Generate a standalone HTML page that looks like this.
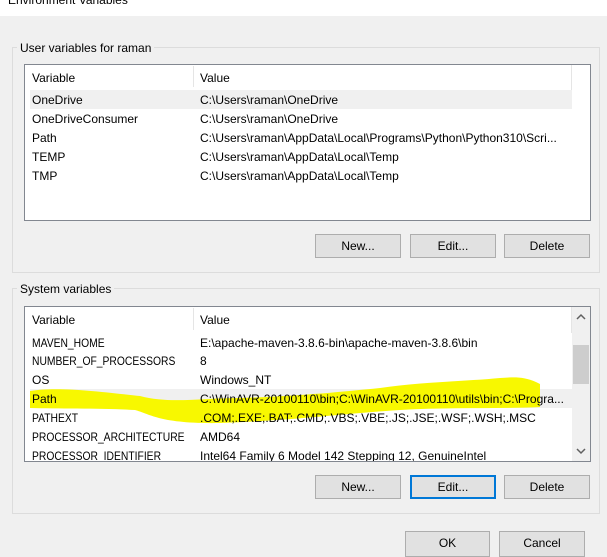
<!DOCTYPE html>
<html><head><style>
*{margin:0;padding:0;box-sizing:border-box}
body{width:607px;height:555px;background:#f0f0f0;font-family:"Liberation Sans",sans-serif;font-size:12px;color:#000;position:relative;overflow:hidden}
.a{position:absolute}
.grp{position:absolute;border:1px solid #dcdcdc}
.lbl{position:absolute;background:#f0f0f0;padding:0 3px;line-height:14px}
.lb{position:absolute;background:#fff;border:1px solid #828790}
.t{position:absolute;white-space:nowrap;line-height:19px}
.c{transform:scaleX(0.86);transform-origin:left center}
.btn{position:absolute;background:#e1e1e1;border:1px solid #adadad;text-align:center;line-height:22px}
</style></head><body>
<div class="a" style="left:0;top:0;width:607px;height:16px;background:#fff"></div>
<div class="t" style="left:8px;top:-9px">Environment Variables</div>

<div class="grp" style="left:12px;top:47px;width:588px;height:226px"></div>
<div class="lbl" style="left:17px;top:41px">User variables for raman</div>
<div class="lb" style="left:24px;top:64px;width:567px;height:157px"></div>
<div class="a" style="left:25px;top:65px;width:547px;height:25px;background:#fff;border-right:1px solid #e5e5e5"></div>
<div class="a" style="left:193px;top:66px;width:1px;height:21px;background:#e5e5e5"></div>
<div class="t" style="left:32px;top:69px">Variable</div><div class="t" style="left:200px;top:69px">Value</div>
<div class="a" style="left:30px;top:90px;width:542px;height:19px;background:#f0f0f0"></div>
<div class="t" style="left:32px;top:91px">OneDrive</div><div class="t" style="left:200px;top:91px">C:\Users\raman\OneDrive</div>
<div class="t" style="left:32px;top:110px">OneDriveConsumer</div><div class="t" style="left:200px;top:110px">C:\Users\raman\OneDrive</div>
<div class="t" style="left:32px;top:129px">Path</div><div class="t" style="left:200px;top:129px">C:\Users\raman\AppData\Local\Programs\Python\Python310\Scri...</div>
<div class="t" style="left:32px;top:148px">TEMP</div><div class="t" style="left:200px;top:148px">C:\Users\raman\AppData\Local\Temp</div>
<div class="t" style="left:32px;top:167px">TMP</div><div class="t" style="left:200px;top:167px">C:\Users\raman\AppData\Local\Temp</div>
<div class="btn" style="left:315px;top:234px;width:86px;height:24px">New...</div>
<div class="btn" style="left:410px;top:234px;width:86px;height:24px">Edit...</div>
<div class="btn" style="left:504px;top:234px;width:86px;height:24px">Delete</div>

<div class="grp" style="left:12px;top:288px;width:588px;height:226px"></div>
<div class="lbl" style="left:17px;top:282px">System variables</div>
<div class="lb" style="left:24px;top:306px;width:567px;height:156px;overflow:hidden"></div>
<div class="a" style="left:25px;top:307px;width:547px;height:26px;background:#fff;border-right:1px solid #e5e5e5"></div>
<div class="a" style="left:193px;top:308px;width:1px;height:22px;background:#e5e5e5"></div>
<div class="t" style="left:32px;top:311px">Variable</div><div class="t" style="left:200px;top:311px">Value</div>
<div class="a" style="left:30px;top:389px;width:542px;height:19px;background:#f0f0f0"></div>
<svg class="a" style="left:0;top:0" width="607" height="555"><path d="M30 391 C60 386 110 393 140 396 C170 404 200 398 240 398 C300 396 340 392 380 388 C420 382 470 381 500 378 C515 377 525 376 540 384 L540 407 C500 409 450 407 400 410 C340 414 300 420 220 423 C160 424 150 414 135 410 C100 408 60 409 30 408 Z" fill="#f8f800"/></svg>
<div style="position:absolute;left:25px;top:334px;width:547px;height:127px;overflow:hidden">
<div class="t c" style="left:7px;top:0">MAVEN_HOME</div><div class="t" style="left:175px;top:0">E:\apache-maven-3.8.6-bin\apache-maven-3.8.6\bin</div>
<div class="t c" style="left:7px;top:18px">NUMBER_OF_PROCESSORS</div><div class="t" style="left:175px;top:18px">8</div>
<div class="t" style="left:7px;top:37px">OS</div><div class="t" style="left:175px;top:37px">Windows_NT</div>
<div class="t" style="left:7px;top:56px">Path</div><div class="t" style="left:175px;top:56px">C:\WinAVR-20100110\bin;C:\WinAVR-20100110\utils\bin;C:\Progra...</div>
<div class="t c" style="left:7px;top:75px">PATHEXT</div><div class="t" style="left:175px;top:75px">.COM;.EXE;.BAT;.CMD;.VBS;.VBE;.JS;.JSE;.WSF;.WSH;.MSC</div>
<div class="t c" style="left:7px;top:94px">PROCESSOR_ARCHITECTURE</div><div class="t" style="left:175px;top:94px">AMD64</div>
<div class="t c" style="left:7px;top:113px">PROCESSOR_IDENTIFIER</div><div class="t" style="left:175px;top:113px">Intel64 Family 6 Model 142 Stepping 12, GenuineIntel</div>
</div>
<div class="a" style="left:572px;top:307px;width:18px;height:154px;background:#f0f0f0"></div>
<div class="a" style="left:573px;top:345px;width:16px;height:39px;background:#cdcdcd"></div>
<svg class="a" style="left:572px;top:310px" width="18" height="150"><path d="M5 9 L9 5 L13 9" stroke="#606060" stroke-width="1.5" fill="none"/><path d="M5 139 L9 143 L13 139" stroke="#606060" stroke-width="1.5" fill="none"/></svg>
<div class="btn" style="left:315px;top:475px;width:86px;height:24px">New...</div>
<div class="btn" style="left:410px;top:475px;width:86px;height:24px;border:2px solid #0078d7;line-height:20px">Edit...</div>
<div class="btn" style="left:504px;top:475px;width:86px;height:24px">Delete</div>

<div class="btn" style="left:405px;top:531px;width:85px;height:26px">OK</div>
<div class="btn" style="left:499px;top:531px;width:86px;height:26px">Cancel</div>
</body></html>
